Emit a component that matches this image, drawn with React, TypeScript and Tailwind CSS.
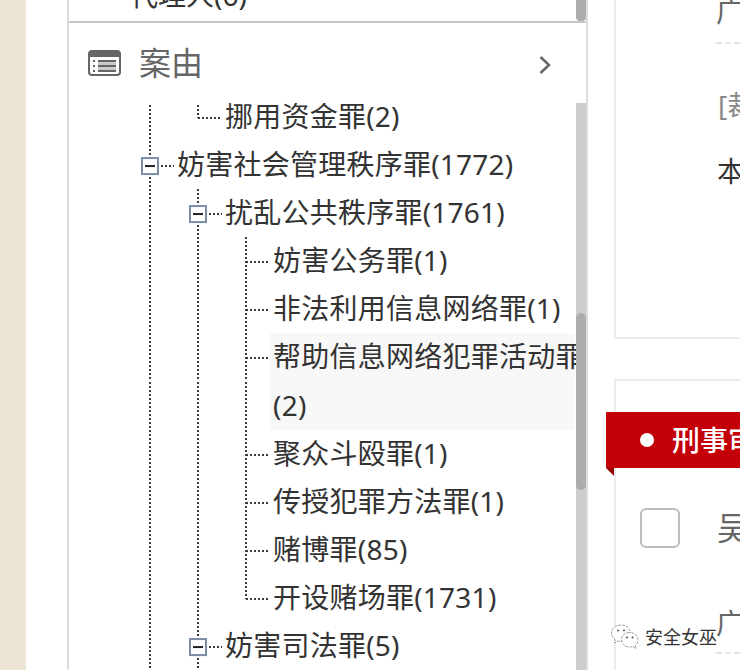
type Guide = 'none' | 'pipe' | 'tee' | 'end' | 'box';

type TreeNode = {
  label: string;
  count: number;
  guides: Guide[];
  active?: boolean;
};

const nodes: TreeNode[] = [
  { label: '挪用资金罪', count: 2, guides: ['pipe', 'end'] },
  { label: '妨害社会管理秩序罪', count: 1772, guides: ['box'] },
  { label: '扰乱公共秩序罪', count: 1761, guides: ['pipe', 'box'] },
  { label: '妨害公务罪', count: 1, guides: ['pipe', 'pipe', 'tee'] },
  { label: '非法利用信息网络罪', count: 1, guides: ['pipe', 'pipe', 'tee'] },
  { label: '帮助信息网络犯罪活动罪', count: 2, guides: ['pipe', 'pipe', 'tee'], active: true },
  { label: '聚众斗殴罪', count: 1, guides: ['pipe', 'pipe', 'tee'] },
  { label: '传授犯罪方法罪', count: 1, guides: ['pipe', 'pipe', 'tee'] },
  { label: '赌博罪', count: 85, guides: ['pipe', 'pipe', 'tee'] },
  { label: '开设赌场罪', count: 1731, guides: ['pipe', 'pipe', 'end'] },
  { label: '妨害司法罪', count: 5, guides: ['pipe', 'box'] },
];

function GuideCell({ type }: { type: Guide }) {
  return (
    <svg className="h-[48.1px] w-12 shrink-0" viewBox="0 0 48 48" preserveAspectRatio="none" fill="none">
      <g stroke="#3a3a3a" strokeWidth="2" strokeDasharray="2 2">
        {(type === 'pipe' || type === 'tee') && <path d="M24 0V48" />}
        {type === 'end' && <path d="M24 0V25" />}
        {(type === 'tee' || type === 'end') && <path d="M24 25H48" />}
        {type === 'box' && <path d="M24 0V15M24 36V48M35 25H49" />}
      </g>
      {type === 'box' && (
        <>
          <rect x="16" y="17" width="16" height="16" stroke="#7c8ea6" strokeWidth="2" fill="#fff" />
          <path d="M19 25H29" stroke="#222" strokeWidth="2" />
        </>
      )}
    </svg>
  );
}

function TreeRow({ node }: { node: TreeNode }) {
  return (
    <li className="flex">
      {node.guides.map((guide, i) => (
        <div key={i} className="flex flex-col">
          <GuideCell type={guide} />
          {node.active && <GuideCell type="pipe" />}
        </div>
      ))}
      <div className={node.active ? 'w-[305px] bg-[#f8f8f8] pl-[3px]' : 'pl-[3px]'}>
        <span className="-mt-px mb-px block whitespace-nowrap leading-[48.1px] tracking-[0.24px]">
          {node.label}
          {node.active && <br />}({node.count})
        </span>
      </div>
    </li>
  );
}

function Watermark() {
  return (
    <div className="absolute top-[623px] left-[610px] flex items-center gap-[6px]">
      <svg className="h-7 w-[29px]" viewBox="0 0 29 28" fill="#fff" stroke="#888" strokeWidth="0.8" strokeDasharray="3 1">
        <path d="M11 2C5.500 2 1.500 5.400 1.500 10C1.500 13 3 15.300 5.300 16.700L4.500 20L8 18C9 18.200 10 18.300 11 18.300C17 18.300 20.500 14.500 20.500 10C20.500 5.400 16.500 2 11 2Z" />
        <path d="M19.500 9.500C15 9.500 11.500 12.600 11.500 16.700C11.500 21 15 24 19.500 24C20.700 24 21.800 23.800 22.700 23.500L26 25.500L25.300 22.500C27 21.200 28 19.200 28 16.700C28 12.600 24 9.500 19.500 9.500Z" />
        <g fill="#444" stroke="none">
          <circle cx="8" cy="7.500" r="0.900" />
          <circle cx="14" cy="7.500" r="0.900" />
          <circle cx="17" cy="14.500" r="0.900" />
          <circle cx="22.500" cy="14.500" r="0.900" />
        </g>
      </svg>
      <span className="text-[18px] leading-7 text-[#333] [text-shadow:-1px_-1px_0_#fff,1px_-1px_0_#fff]">安全女巫</span>
    </div>
  );
}

export default function App() {
  return (
    <div className="relative flex h-[670px] w-[740px] overflow-hidden bg-white font-['Noto_Sans','Noto_Sans_CJK_SC',sans-serif] text-[28px] text-[#333]">
      <div className="w-[26px] shrink-0 bg-[#ede5d6]" />

      <aside className="ml-[41px] flex w-[521px] shrink-0 flex-col border-x-2 border-[#dcdcdc]">
        <div className="flex h-[23px] shrink-0 items-end justify-between overflow-hidden border-b-2 border-[#c8c8c8]">
          <span className="pb-[2px] pl-[61px] leading-[48px]">代理人(6)</span>
          <div className="h-[40px] w-[10px] rounded-b bg-[#adadad]" />
        </div>

        <div className="flex h-20 shrink-0 items-center pr-[34px] pl-[19px] text-[#666]">
          <svg className="h-[26px] w-[33px]" viewBox="0 0 33 26" fill="none">
            <rect x="1" y="1" width="31" height="24" rx="3" stroke="#666" strokeWidth="2" fill="#fff" />
            <path d="M1 7V4Q1 1 4 1H29Q32 1 32 4V7Z" fill="#666" />
            <path d="M10 11H28V21H10Z" fill="#ccc" />
            <path d="M5 11H7M5 16H7M5 21H7M10 11H28M10 16H28M10 21H28" stroke="#666" strokeWidth="2" />
          </svg>
          <h2 className="ml-[18px] text-[32px] leading-[40px]">案由</h2>
          <svg className="mt-[3px] ml-auto h-[20px] w-[14px]" viewBox="0 0 14 20" fill="none" stroke="#666" strokeWidth="2.500">
            <path d="M2.500 2L11 10L2.500 18" />
          </svg>
        </div>

        <div className="flex min-h-0 flex-1">
          <div className="w-[507px] overflow-hidden pl-[57px]">
            <ul className="-mt-[10px]">
              {nodes.map((node) => (
                <TreeRow key={node.label} node={node} />
              ))}
            </ul>
          </div>
          <div className="w-[10px] bg-[#cccccc] pt-[210px]">
            <div className="h-[177px] rounded-full bg-[#adadad]" />
          </div>
        </div>
      </aside>

      <main className="ml-[26px] flex w-[126px] shrink-0 flex-col">
        <section className="h-[339px] shrink-0 overflow-hidden border-b-2 border-l-2 border-[#ececec] whitespace-nowrap">
          <div className="ml-[100px] flex h-[44px] items-end border-b-2 border-dashed border-[#e4e4e4]">
            <span className="pb-[7px] leading-[48px] text-[#666]">广</span>
          </div>
          <p className="mt-[37px] ml-[102px] leading-[48px] text-[#888]">[裁</p>
          <p className="mt-[18px] ml-[101px] leading-[48px]">本</p>
        </section>

        <section className="mt-[40px] flex-1 overflow-hidden border-t-2 border-l-2 border-[#ececec] whitespace-nowrap">
          <div className="h-[87px]" />
          <div className="mt-[40px] ml-[24px] flex h-[40px] items-center">
            <div className="size-[40px] shrink-0 rounded-md border-2 border-[#bdbdbd]" />
            <span className="ml-[37px] text-[32px] leading-[48px] text-[#666]">吴</span>
          </div>
          <div className="mt-[50px] ml-[100px] flex h-[56px] items-center border-b-2 border-dashed border-[#e4e4e4] pb-[5px] text-[#666]">
            广
          </div>
        </section>
      </main>

      {/* ribbon overlaps the card's left edge */}
      <div className="absolute top-[412px] left-[606px] w-[134px]">
        <div className="flex h-[56px] items-center overflow-hidden bg-[#c30008] pl-[34px] font-medium whitespace-nowrap text-white">
          <span className="size-[14px] shrink-0 rounded-full bg-white" />
          <span className="ml-[18px]">刑事审</span>
        </div>
        <div className="h-[8px] w-[8px] bg-[#900] [clip-path:polygon(0_0,100%_0,100%_100%)]" />
      </div>

      <Watermark />
    </div>
  );
}
